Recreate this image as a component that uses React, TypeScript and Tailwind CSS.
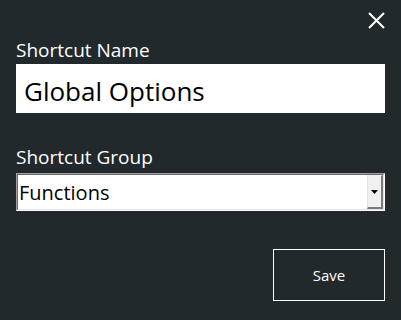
export default function App() {
  return (
    <div
      className="flex h-[320px] w-[401px] flex-col bg-[#22292c] px-4 text-white"
      style={{ fontFamily: '"Open Sans", "Noto Sans", sans-serif' }}
    >
      {/* close */}
      <div className="mt-[12px] flex h-[17px] justify-end">
        <button type="button" aria-label="Close" className="h-[17px] w-[17px]">
          <svg width="17" height="17" viewBox="0 0 17 17" fill="none">
            <path d="M1 1L16 16M16 1L1 16" stroke="#ffffff" strokeWidth="2" />
          </svg>
        </button>
      </div>

      <label className="mt-[9px] text-[19px] leading-[24px]">Shortcut Name</label>
      <div className="mt-[2px] h-[49px] bg-white pl-[8px] pt-[7px] text-[26px] leading-[41px] text-black">
        Global Options
      </div>

      <label className="mt-[32px] text-[19px] leading-[24px]">Shortcut Group</label>
      <div className="mt-[4px] h-[38px] border border-t-[#a0a0a0] border-l-[#a0a0a0] border-r-white border-b-white">
        <div className="flex h-full border border-t-[#696969] border-l-[#696969] border-r-[#e3e3e3] border-b-[#e3e3e3] bg-white">
          <div className="flex-1 pl-[1px] pt-[2px] text-[20px] leading-[32px] text-black">Functions</div>
          <div className="flex w-[16px] items-center justify-center border-t border-l border-b-2 border-r-2 border-t-[#f0f0f0] border-l-[#e3e3e3] border-b-[#7a7a7a] border-r-[#7a7a7a] bg-[#f0f0f0]">
            <svg width="7" height="4" viewBox="0 0 7 4">
              <path d="M0 0H7L3.5 4Z" fill="#000000" />
            </svg>
          </div>
        </div>
      </div>

      <button
        type="button"
        className="mt-[38px] h-[52px] w-[112px] self-end border border-white text-[15px] text-white"
      >
        Save
      </button>
    </div>
  );
}
